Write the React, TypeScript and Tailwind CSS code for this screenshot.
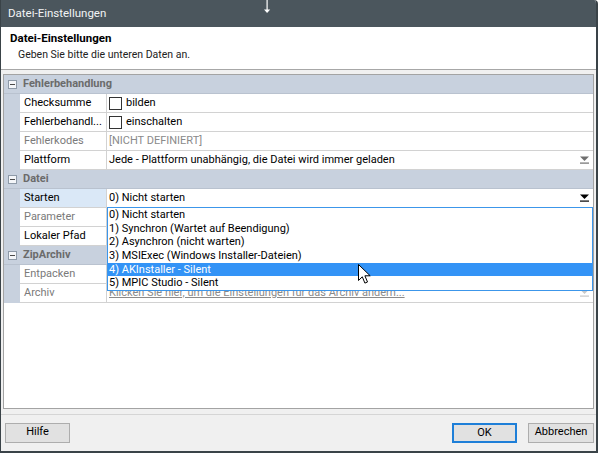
import React from 'react'

const font = { fontFamily: 'Roboto, "Noto Sans", sans-serif' }

type Row =
    | { kind: 'cat'; label: string }
    | { kind: 'prop'; label: string; value?: React.ReactNode; muted?: boolean; selected?: boolean; arrow?: 'dark' | 'light' | 'faint' }

const Checkbox = ({ text }: { text: string }) => (
    <span className="flex items-center gap-[4px]">
        <span className="w-[13px] h-[13px] border border-[#333] bg-white" />
        <span>{text}</span>
    </span>
)

const rows: Row[] = [
    { kind: 'cat', label: 'Fehlerbehandlung' },
    { kind: 'prop', label: 'Checksumme', value: <Checkbox text="bilden" /> },
    { kind: 'prop', label: 'Fehlerbehandl...', value: <Checkbox text="einschalten" /> },
    { kind: 'prop', label: 'Fehlerkodes', value: <span className="text-[#8a8a8a]">[NICHT DEFINIERT]</span>, muted: true },
    { kind: 'prop', label: 'Plattform', value: 'Jede - Plattform unabhängig, die Datei wird immer geladen', arrow: 'light' },
    { kind: 'cat', label: 'Datei' },
    { kind: 'prop', label: 'Starten', value: '0) Nicht starten', selected: true, arrow: 'dark' },
    { kind: 'prop', label: 'Parameter', muted: true },
    { kind: 'prop', label: 'Lokaler Pfad' },
    { kind: 'cat', label: 'ZipArchiv' },
    { kind: 'prop', label: 'Entpacken', muted: true },
    {
        kind: 'prop',
        label: 'Archiv',
        muted: true,
        arrow: 'faint',
        value: <span className="text-[#8a8a8a] underline">Klicken Sie hier, um die Einstellungen für das Archiv ändern...</span>,
    },
]

const options = [
    '0) Nicht starten',
    '1) Synchron (Wartet auf Beendigung)',
    '2) Asynchron (nicht warten)',
    '3) MSIExec (Windows Installer-Dateien)',
    '4) AKInstaller - Silent',
    '5) MPIC Studio - Silent',
]

const DropArrow = ({ tone }: { tone: 'dark' | 'light' | 'faint' }) => {
    const c = tone === 'dark' ? '#000' : tone === 'light' ? '#6f6f6f' : '#c8c8c8'
    return (
        <svg width="9" height="8" viewBox="0 0 9 8" className="mr-[4px] shrink-0">
            <path d="M0 0.5h9L4.5 5z" fill={c} />
            <rect x="0" y="6.5" width="9" height="1.2" fill={c} />
        </svg>
    )
}

const Minus = () => (
    <span className="w-[9px] h-[9px] border border-[#8e9aa8] bg-[#f4f6f9] flex items-center justify-center">
        <span className="w-[5px] h-px bg-[#4a4a4a]" />
    </span>
)

const Cursor = () => (
    <svg width="13" height="20" viewBox="0 0 13 20" className="absolute left-[250px] top-[56px]">
        <path d="M0.5 0.5v16l3.8-3.7 2.6 6.3 2.6-1.1-2.6-6.2h5.3z" fill="#fff" stroke="#000" strokeWidth="1" strokeLinejoin="round" />
    </svg>
)

const App = () => {
    return (
        <div className="w-[600px] h-[455px] bg-white text-[11px] text-black" style={font}>
            <div className="w-[598px] h-[453px] flex flex-col border-l border-r-2 border-b-2 border-[#3a4348] bg-[#f0f0f0] rounded-tr-[4px] overflow-hidden">
                <div className="h-[27px] shrink-0 bg-[#4b565d] flex items-center px-[7px] relative text-[11.5px] text-[#f2f4f5]">
                    Datei-Einstellungen
                    <svg width="8" height="14" viewBox="0 0 8 14" className="absolute left-[262px] top-0">
                        <rect x="3.5" y="0" width="1.2" height="10" fill="#fff" />
                        <path d="M1 9.5h6.2L4.1 13z" fill="#fff" />
                    </svg>
                </div>
                <div className="h-[43px] shrink-0 bg-white border-b border-[#a7a7a7] px-[9px] pt-[2px]">
                    <div className="font-bold text-[11.5px] leading-[18px]">Datei-Einstellungen</div>
                    <div className="pl-[8px] text-[10.5px] leading-[16px] text-[#222]">Geben Sie bitte die unteren Daten an.</div>
                </div>
                <div className="flex-1 flex flex-col px-[2px] pt-[4px]">
                    <div className="h-[335px] border border-[#a3a3a3] bg-white relative">
                        {rows.map((row, i) =>
                            row.kind === 'cat' ? (
                                <div key={i} className="h-[19px] flex items-center bg-[#c8d1de] border-b border-[#b9c2cf]">
                                    <span className="w-[16px] flex justify-center">
                                        <Minus />
                                    </span>
                                    <span className="pl-[3px] font-bold text-[#6b6b6b]">{row.label}</span>
                                </div>
                            ) : (
                                <div key={i} className="h-[19px] flex">
                                    <span className="w-[16px] shrink-0 bg-[#c8d1de]" />
                                    <span
                                        className={`w-[87px] shrink-0 flex items-center pl-[4px] border-r border-b border-[#d2d2d2] whitespace-nowrap overflow-hidden ${
                                            row.selected ? 'bg-[#dae8f7]' : ''
                                        } ${row.muted ? 'text-[#7a7a7a]' : ''}`}
                                    >
                                        {row.label}
                                    </span>
                                    <span className="flex-1 flex items-center justify-between pl-[2px] border-b border-[#d2d2d2] whitespace-nowrap overflow-hidden">
                                        <span>{row.value}</span>
                                        {row.arrow && <DropArrow tone={row.arrow} />}
                                    </span>
                                </div>
                            )
                        )}
                        <div className="absolute left-[103px] right-0 top-[132px] h-[84px] border border-[#3c96ea] bg-white">
                            {options.map((o, i) => (
                                <div
                                    key={o}
                                    className={`h-[13.7px] leading-[13.7px] pl-[1px] whitespace-nowrap ${
                                        i === 4 ? 'bg-[#3393f6] text-white' : ''
                                    }`}
                                >
                                    {o}
                                </div>
                            ))}
                            <Cursor />
                        </div>
                    </div>
                    <div className="h-[5px]" />
                    <div className="flex-1 -mx-[2px] border-t border-[#d5d5d5] flex items-center justify-between pl-[4px] pr-[2px] pb-[1px]">
                        <button className="w-[65px] h-[20px] bg-[#e1e1e1] border border-[#adadad] text-[11px]">Hilfe</button>
                        <div className="flex gap-[11px]">
                            <button className="w-[65px] h-[20px] bg-[#e1e1e1] border-2 border-[#1e7fd8] text-[11px]">OK</button>
                            <button className="w-[66px] h-[20px] bg-[#e1e1e1] border border-[#adadad] text-[11px]">Abbrechen</button>
                        </div>
                    </div>
                </div>
            </div>
        </div>
    )
}

export default App
